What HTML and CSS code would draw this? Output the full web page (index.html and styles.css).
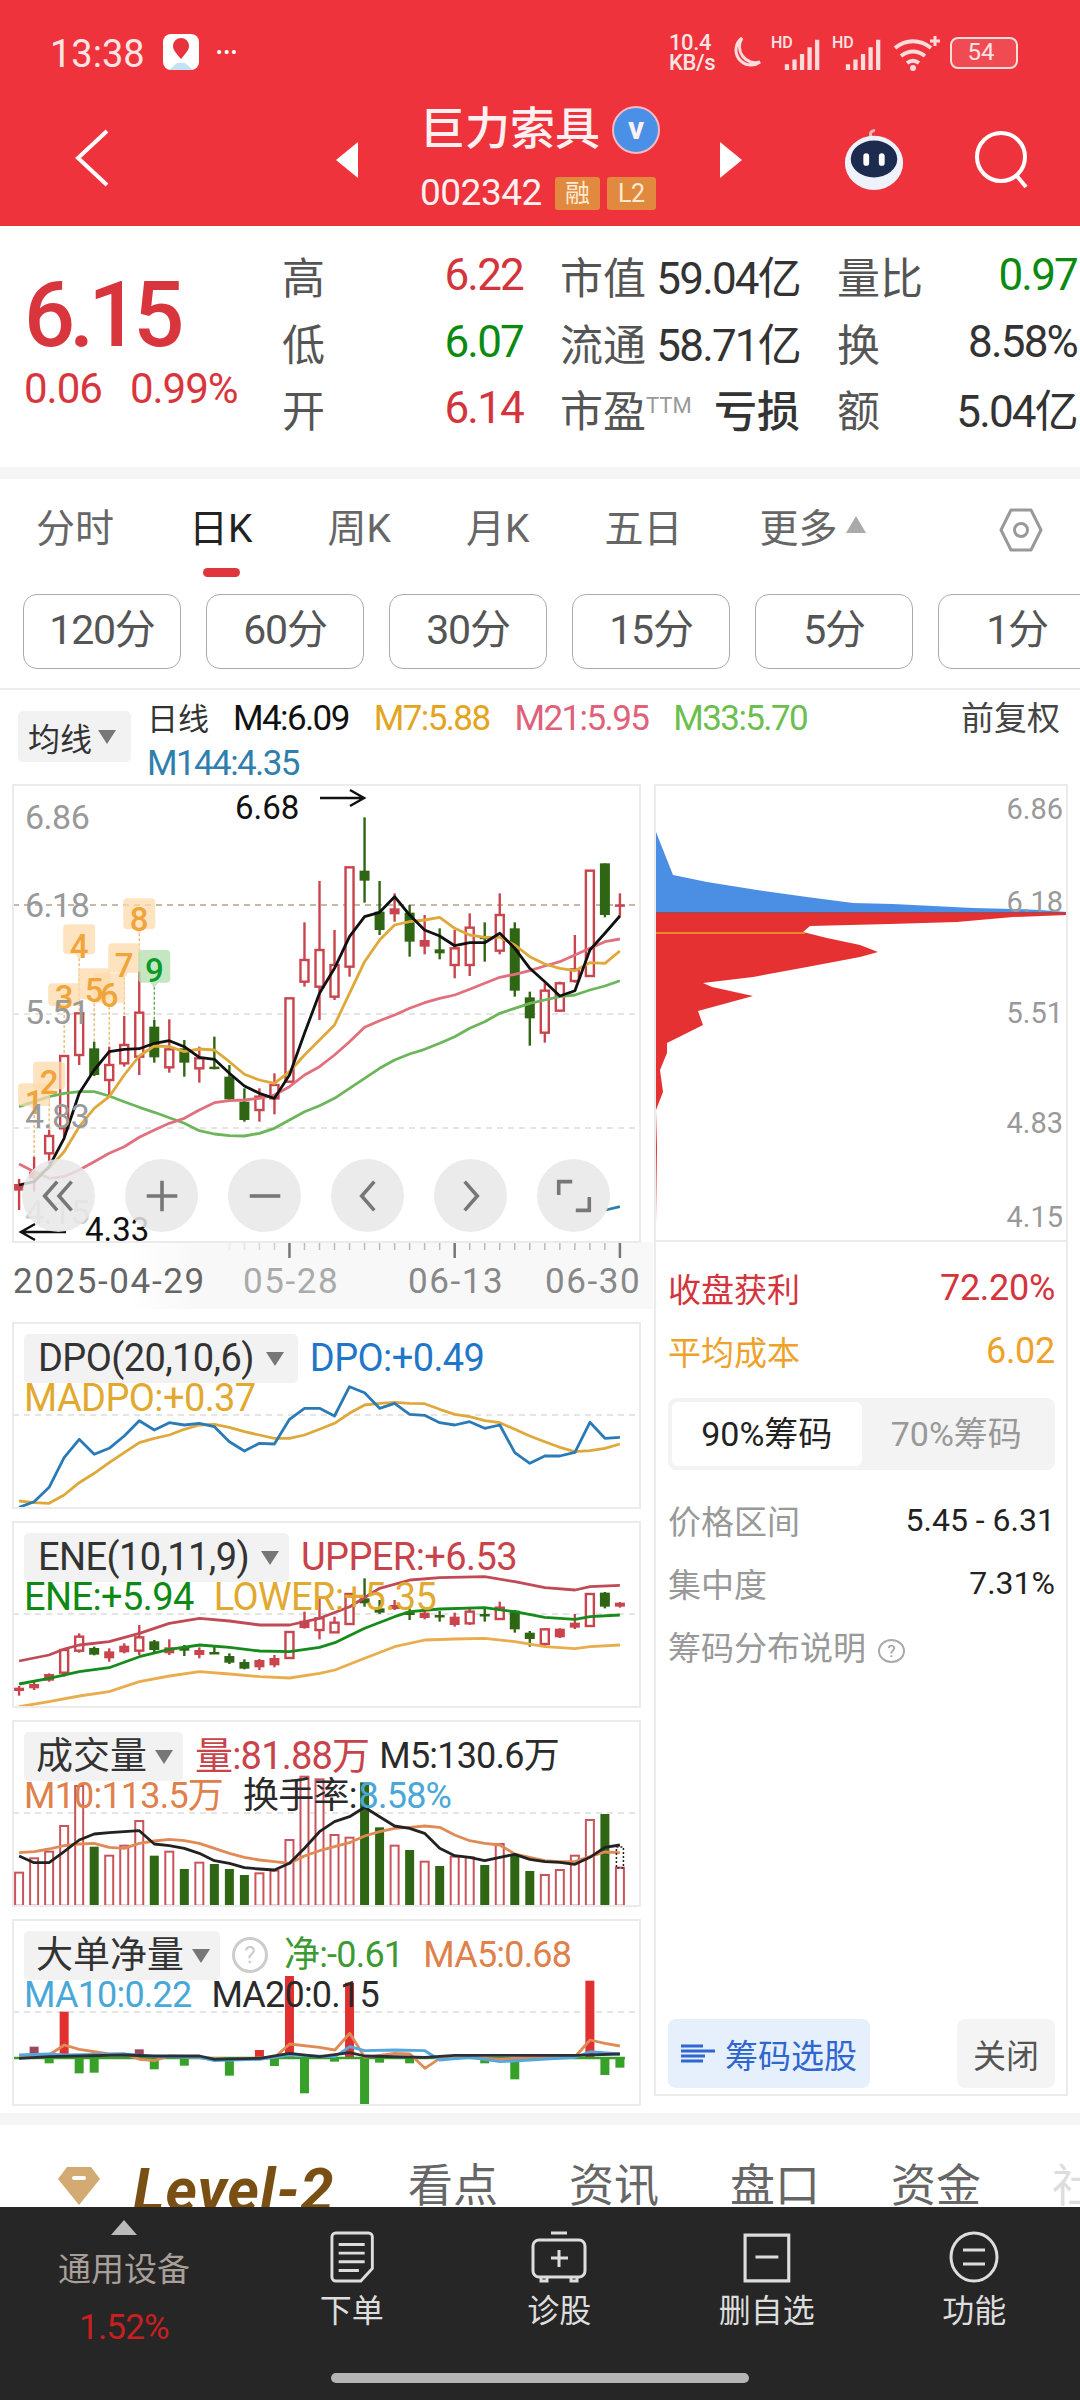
FILE: index.html
```html
<!DOCTYPE html>
<html lang="zh-CN">
<head>
    <meta charset="UTF-8">
    <meta name="viewport" content="width=device-width, initial-scale=1.0">
    <title>巨力索具</title>
    <link rel="stylesheet" href="styles.css">
</head>
<body>
    <header class="topbar">
        <div class="status">
            <span class="clock">13:38</span>
            <svg class="app-icon" viewBox="0 0 36 36">
                <rect width="36" height="36" rx="8" fill="#fff"/>
                <path d="M18 25c-5-6-8-9-8-13a8 8 0 0 1 16 0c0 4-3 7-8 13z" fill="#e8333c"/>
                <path d="M6 36l8-7h8l8 7z" fill="#bfe3f2"/>
            </svg>
            <span class="more-dots">•••</span>
            <span class="status-right">
                <span class="speed">10.4<br>KB/s</span>
                <svg class="moon" viewBox="0 0 34 36"><path d="M14 3a15 15 0 1 0 18 24A16 16 0 0 1 14 3z" fill="none" stroke="#fbdcdc" stroke-width="3"/></svg>
                <span class="signal"><i>HD</i><svg viewBox="0 0 40 36"><path d="M3 36v-6M11 36v-11M19 36v-17M27 36v-24M35 36V4" stroke="#fbdcdc" stroke-width="4.5"/></svg></span>
                <span class="signal"><i>HD</i><svg viewBox="0 0 40 36"><path d="M3 36v-6M11 36v-11M19 36v-17M27 36v-24M35 36V4" stroke="#fbdcdc" stroke-width="4.5"/></svg></span>
                <svg class="wifi" viewBox="0 0 48 36"><path d="M2 13c11-9 25-9 36 0M8 21c8-6 16-6 24 0M14 28c4-3 8-3 12 0" fill="none" stroke="#fbdcdc" stroke-width="4"/><circle cx="20" cy="33" r="3" fill="#fbdcdc"/><path d="M42 1v10M37 6h10" stroke="#fbdcdc" stroke-width="3"/></svg>
                <span class="battery"><span>54</span></span>
            </span>
        </div>
        <div class="navbar">
            <svg class="back" viewBox="0 0 36 58"><path d="M33 2L4 29l29 27" fill="none" stroke="#fff" stroke-width="4"/></svg>
            <span class="tri tri-left"></span>
            <div class="stock">
                <div class="stock-name">巨力索具<span class="vbadge">v</span></div>
                <div class="stock-code">002342<span class="tag-rong">融</span><span class="tag-l2">L2</span></div>
            </div>
            <span class="tri tri-right"></span>
            <svg class="robot" viewBox="0 0 66 66">
                <path d="M30 9c-2-4 1-7 4-6" fill="none" stroke="#f4b8b8" stroke-width="3"/>
                <ellipse cx="33" cy="36" rx="30" ry="28" fill="#eef3fb"/>
                <ellipse cx="33" cy="32" rx="24" ry="19" fill="#1d2b4f"/>
                <rect x="22" y="26" width="6" height="13" rx="3" fill="#fff"/>
                <rect x="38" y="26" width="6" height="13" rx="3" fill="#fff"/>
            </svg>
            <svg class="search" viewBox="0 0 58 58"><circle cx="27" cy="26" r="24" fill="none" stroke="#fff" stroke-width="4"/><path d="M42 44l10 12" stroke="#fff" stroke-width="4"/></svg>
        </div>
    </header>

    <section class="quote">
        <div class="last">
            <div class="last-price">6.15</div>
            <div class="last-change"><span>0.06</span><span>0.99%</span></div>
        </div>
        <div class="stats">
            <div class="cell"><span class="lbl">高</span><span class="up">6.22</span></div>
            <div class="cell"><span class="lbl">市值</span><span>59.04亿</span></div>
            <div class="cell"><span class="lbl">量比</span><span class="down">0.97</span></div>
            <div class="cell"><span class="lbl">低</span><span class="down">6.07</span></div>
            <div class="cell"><span class="lbl">流通</span><span>58.71亿</span></div>
            <div class="cell"><span class="lbl">换</span><span>8.58%</span></div>
            <div class="cell"><span class="lbl">开</span><span class="up">6.14</span></div>
            <div class="cell"><span class="lbl">市盈<sup>TTM</sup></span><span class="strong">亏损</span></div>
            <div class="cell"><span class="lbl">额</span><span>5.04亿</span></div>
        </div>
    </section>
    <div class="band"></div>

    <nav class="tabs">
        <span>分时</span>
        <span class="active">日K</span>
        <span>周K</span>
        <span>月K</span>
        <span class="five">五日</span>
        <span class="more">更多<b></b></span>
        <svg class="gear" viewBox="0 0 44 46"><path d="M12 3h20l10 20-10 20H12L2 23z" fill="none" stroke="#999" stroke-width="3" stroke-linejoin="round"/><circle cx="22" cy="23" r="6.5" fill="none" stroke="#999" stroke-width="3"/></svg>
    </nav>

    <div class="periods">
        <span>120分</span><span>60分</span><span>30分</span><span>15分</span><span>5分</span><span>1分</span>
    </div>

    <div class="ma-legend">
        <div class="picker ma-picker">均线<b></b></div>
        <div class="ma-values">
            <span class="ma-black"><em>日线</em>M4:6.09</span><span class="ma-yellow">M7:5.88</span><span class="ma-pink">M21:5.95</span><span class="ma-green">M33:5.70</span><br>
            <span class="ma-blue">M144:4.35</span>
        </div>
        <span class="adjust">前复权</span>
    </div>

    <main class="charts">
        <div class="left-col">
            <div class="panel main-chart">
                <svg viewBox="13 785 627 457">
                    <g id="main-plot"></g>
                    <text class="axis-label" x="25" y="829">6.86</text>
                    <text class="axis-label" x="25" y="917">6.18</text>
                    <text class="axis-label" x="25" y="1024">5.51</text>
                    <text class="axis-label" x="25" y="1128">4.83</text>
                    <text class="axis-label faint" x="25" y="1224">4.15</text>
                    <text class="extreme" x="235" y="819">6.68</text>
                    <path class="arrow" d="M320 798h44m-14-8l14 8-14 8"/>
                    <text class="extreme" x="85" y="1241">4.33</text>
                    <path class="arrow" d="M66 1232H21m14-8l-14 8 14 8"/>
                </svg>
                <div class="zoom-btns">
                    <span><svg viewBox="0 0 40 40"><path d="M18 4L4 20l14 16M34 4L20 20l14 16"/></svg></span>
                    <span><svg viewBox="0 0 40 40"><path d="M3 20h34M20 3v34"/></svg></span>
                    <span><svg viewBox="0 0 40 40"><path d="M3 20h34"/></svg></span>
                    <span><svg viewBox="0 0 40 40"><path d="M27 4L13 20l14 16"/></svg></span>
                    <span><svg viewBox="0 0 40 40"><path d="M13 4l14 16-14 16"/></svg></span>
                    <span><svg viewBox="0 0 40 40"><path d="M18 4H3v15M22 36h15V21"/></svg></span>
                </div>
            </div>
            <div class="axis">
                <svg viewBox="0 1242 640 18" id="axis-ticks"></svg>
                <div class="axis-dates">
                    <span>2025-04-29</span><span class="soft">05-28</span><span>06-13</span><span>06-30</span>
                </div>
            </div>

            <div class="panel sub-chart dpo-panel">
                <svg viewBox="13 1323 627 185" id="dpo-plot"></svg>
                <div class="sub-legend">
                    <div class="lg-top">
                        <div class="picker">DPO(20,10,6)<b></b></div>
                        <span class="c-blue">DPO:+0.49</span>
                    </div>
                    <div class="lg-next"><span class="c-gold">MADPO:+0.37</span></div>
                </div>
            </div>
            <div class="panel sub-chart">
                <svg viewBox="13 1522 627 185" id="ene-plot"></svg>
                <div class="sub-legend">
                    <div class="lg-top">
                        <div class="picker ene-picker">ENE(10,11,9)<b></b></div>
                        <span class="c-red">UPPER:+6.53</span>
                    </div>
                    <div class="lg-next"><span class="c-green">ENE:+5.94</span><span class="c-gold">LOWER:+5.35</span></div>
                </div>
            </div>
            <div class="panel sub-chart">
                <svg viewBox="13 1721 627 185" id="vol-plot"></svg>
                <div class="sub-legend compact">
                    <div class="lg-top">
                        <div class="picker">成交量<b></b></div>
                        <span class="c-red wide">量:81.88万</span><span class="c-dark">M5:130.6万</span>
                    </div>
                    <div class="lg-next"><span class="c-orange">M10:113.5万</span><span class="c-dark">换手率:</span><span class="c-sky tight">8.58%</span></div>
                </div>
            </div>
            <div class="panel sub-chart">
                <svg viewBox="13 1920 627 185" id="net-plot"></svg>
                <div class="sub-legend compact">
                    <div class="lg-top">
                        <div class="picker">大单净量<b></b></div>
                        <span class="help">?</span>
                        <span class="c-lime">净:-0.61</span><span class="c-orange">MA5:0.68</span>
                    </div>
                    <div class="lg-next"><span class="c-sky">MA10:0.22</span><span class="c-dark">MA20:0.15</span></div>
                </div>
            </div>
        </div>

        <aside class="chips">
            <div class="chip-chart">
                <svg viewBox="655 785 412 457">
                    <polygon fill="#4a8fe3" points="656,832 673,875 707,882 757,890 807,897 853,903 893,904 933,906 973,908 1013,909 1040,910 1067,912 656,912"/>
                    <polygon fill="#e53131" points="656,912 1067,912 1067,915 1013,917 957,922 890,924 810,926 803,932 827,938 860,945 878,952 860,957 807,967 753,977 703,983 712,987 753,996 698,1011 703,1025 667,1043 667,1053 660,1070 663,1092 656,1110 657,1147 656,1223"/>
                    <path d="M656 913h411" stroke="#b8404c" stroke-width="2"/>
                    <path d="M656 933h149" stroke="#f0a030" stroke-width="1.5"/>
                    <text class="chip-label" x="1063" y="819">6.86</text>
                    <text class="chip-label" x="1063" y="912">6.18</text>
                    <text class="chip-label" x="1063" y="1023">5.51</text>
                    <text class="chip-label" x="1063" y="1133">4.83</text>
                    <text class="chip-label" x="1063" y="1227">4.15</text>
                </svg>
            </div>
            <div class="chip-info">
                <div class="row up"><span>收盘获利</span><em>72.20%</em></div>
                <div class="row gold"><span>平均成本</span><em>6.02</em></div>
                <div class="segment"><span class="on">90%筹码</span><span>70%筹码</span></div>
                <div class="row muted"><span>价格区间</span><b>5.45 - 6.31</b></div>
                <div class="row muted"><span>集中度</span><b>7.31%</b></div>
                <div class="row muted"><span>筹码分布说明<i class="help-small">?</i></span></div>
                <div class="chip-actions">
                    <span class="pick">
                        <svg viewBox="0 0 34 20"><path d="M0 2h22M0 7h34M0 12h24M0 17h22" stroke="#2f66d0" stroke-width="3"/></svg>筹码选股
                    </span>
                    <span class="close">关闭</span>
                </div>
            </div>
        </aside>
    </main>

    <div class="band"></div>

    <div class="section-tabs">
        <svg class="gem" viewBox="0 0 42 38"><path d="M9 0h24l9 12-21 26L0 12z" fill="#d2aa72"/><rect x="14" y="9" width="14" height="4" rx="2" fill="#fff"/></svg>
        <span class="level2">Level-2</span>
        <span>看点</span><span>资讯</span><span>盘口</span><span>资金</span><span class="fade">社</span>
    </div>

    <footer class="dock">
        <div class="actions">
            <div class="index">
                <b></b>
                <span class="index-name">通用设备</span>
                <span class="index-pct">1.52%</span>
            </div>
            <div class="action">
                <svg viewBox="0 0 46 54"><path d="M6 2h34a4 4 0 0 1 4 4v33L32 52H6a4 4 0 0 1-4-4V6a4 4 0 0 1 4-4z"/><path d="M9 14h27M9 23h27M9 32h27M9 41h21"/></svg>
                下单
            </div>
            <div class="action">
                <svg viewBox="0 0 56 52"><path d="M20 2h16M8 9h40a6 6 0 0 1 6 6v25a6 6 0 0 1-6 6H8a6 6 0 0 1-6-6V15a6 6 0 0 1 6-6zM10 46v4h6v-4M40 46v4h6v-4M28 19v17M20 27h17"/></svg>
                诊股
            </div>
            <div class="action">
                <svg viewBox="0 0 46 50"><path d="M2 4h42v44H2zM12 25h22"/></svg>
                删自选
            </div>
            <div class="action">
                <svg viewBox="0 0 50 52"><ellipse cx="25" cy="26" rx="23" ry="24"/><path d="M14 19h22M14 33h22"/></svg>
                功能
            </div>
        </div>
        <div class="home-pill"></div>
    </footer>

    <script src="chart.js"></script>
</body>
</html>
```

FILE: styles.css
```css
* {
    box-sizing: border-box;
}
body {
    margin: 0;
    width: 1080px;
    height: 2400px;
    overflow: hidden;
    background: #fff;
    font-family: Roboto, "Noto Sans CJK SC", sans-serif;
    color: #333;
}
svg {
    display: block;
}

/* top red bar */
.topbar {
    height: 226px;
    background: #ee333c;
    color: #fff;
}
.status {
    height: 110px;
    padding: 34px 62px 0 50px;
    display: flex;
    align-items: flex-start;
}
.clock {
    font-size: 38px;
    line-height: 40px;
    color: #fbe4e4;
    width: 113px;
}
.app-icon {
    width: 36px;
    height: 36px;
}
.more-dots {
    font-size: 19px;
    line-height: 38px;
    margin-left: 17px;
    letter-spacing: 1px;
}
.status-right {
    margin-left: auto;
    display: flex;
    gap: 9px;
    align-items: center;
    height: 38px;
}
.speed {
    font-size: 22px;
    line-height: 20px;
    font-weight: 500;
    width: 50px;
    color: #fbe4e4;
    letter-spacing: -.4px;
}
.moon {
    width: 34px;
    height: 36px;
}
.signal {
    position: relative;
    width: 52px;
    display: block;
}
.signal svg {
    width: 40px;
    height: 34px;
    margin-left: 12px;
}
.signal i {
    position: absolute;
    left: 0;
    top: -3px;
    font-style: normal;
    font-size: 16px;
    font-weight: 500;
    color: #fbe4e4;
}
.wifi {
    width: 48px;
    height: 36px;
}
.battery {
    width: 68px;
    height: 32px;
    border: 2px solid #fbdcdc;
    border-radius: 8px;
    font-size: 24px;
    line-height: 27px;
    text-align: center;
    color: #fbe4e4;
    background: rgba(255, 255, 255, .12);
    padding-right: 6px;
}
.navbar {
    height: 116px;
    position: relative;
    display: flex;
    align-items: center;
}
.back {
    width: 36px;
    height: 58px;
    margin: 0 0 20px 74px;
}
.tri {
    width: 0;
    height: 0;
    border-top: 18px solid transparent;
    border-bottom: 18px solid transparent;
    margin-bottom: 16px;
}
.tri-left {
    border-right: 22px solid #fff;
    margin-left: 226px;
}
.tri-right {
    border-left: 22px solid #fff;
    margin-left: 0;
}
.stock {
    width: 362px;
    padding: 0 0 0 62px;
    margin-bottom: 20px;
}
.stock-name {
    font-size: 45px;
    line-height: 50px;
    font-weight: 500;
    display: flex;
    align-items: center;
    color: #fdf0f0;
}
.vbadge {
    width: 48px;
    height: 48px;
    border-radius: 50%;
    background: #4a90e6;
    border: 2px solid #f7b9c0;
    margin-left: 12px;
    text-align: center;
    font-size: 32px;
    line-height: 40px;
    font-weight: 700;
}
.stock-code {
    font-size: 37px;
    line-height: 36px;
    margin-top: 20px;
    display: flex;
    align-items: center;
    letter-spacing: -.5px;
    color: #fdf0f0;
}
.stock-code span {
    height: 33px;
    background: #e0893f;
    border-radius: 3px;
    font-size: 25px;
    line-height: 33px;
    text-align: center;
    color: #fde9d0;
}
.tag-rong {
    width: 45px;
    margin-left: 13px;
}
.tag-l2 {
    width: 49px;
    margin-left: 7px;
}
.robot {
    width: 72px;
    height: 64px;
    margin: 0 0 16px 96px;
}
.search {
    width: 58px;
    height: 58px;
    margin: 0 0 16px 64px;
}

/* quote block */
.quote {
    height: 241px;
    display: flex;
}
.last {
    width: 282px;
    padding: 40px 0 0 24px;
    color: #d8353d;
}
.last-price {
    font-size: 90px;
    line-height: 100px;
    font-weight: 500;
    letter-spacing: -6px;
}
.last-change {
    display: flex;
    gap: 28px;
    font-size: 42px;
    line-height: 44px;
    margin-top: 1px;
    letter-spacing: -1px;
}
.stats {
    flex: 1;
    padding-top: 16px;
    display: grid;
    grid-template-columns: 241px 240px 240px;
    grid-auto-rows: 66.5px;
    column-gap: 37px;
    font-size: 44px;
    letter-spacing: -1.8px;
}
.cell {
    display: flex;
    justify-content: space-between;
    align-items: center;
    white-space: nowrap;
}
.lbl {
    color: #555;
    font-size: 43px;
    letter-spacing: 0;
}
.lbl sup {
    font-size: 22px;
    color: #999;
    vertical-align: 14px;
    line-height: 0;
}
.up {
    color: #d4343c;
}
.down {
    color: #0b8a10;
}
.strong {
    font-weight: 500;
    font-size: 43px;
    letter-spacing: 0;
}
.band {
    height: 12px;
    background: #f5f5f5;
}

/* period tabs */
.tabs {
    height: 115px;
    position: relative;
    display: flex;
    align-items: center;
    padding: 0 0 24px 36px;
    font-size: 39px;
    color: #666;
}
.tabs span {
    margin-right: 75px;
    position: relative;
}
.tabs .five {
    margin-right: 77px;
}
.tabs .active {
    color: #222;
}
.tabs .active::after {
    content: "";
    position: absolute;
    left: 14px;
    top: 71px;
    width: 37px;
    height: 9px;
    border-radius: 5px;
    background: #e0353c;
}
.tabs .more {
    margin-right: 0;
    display: flex;
    align-items: center;
}
.tabs .more b {
    margin-left: 8px;
    border-left: 10px solid transparent;
    border-right: 10px solid transparent;
    border-bottom: 17px solid #aaa;
}
.gear {
    position: absolute;
    left: 999px;
    top: 28px;
    width: 44px;
    height: 46px;
}
.periods {
    height: 75px;
    margin-left: 23px;
    display: flex;
    gap: 25px;
    overflow: hidden;
}
.periods span {
    flex: 0 0 158px;
    border: 1px solid #aaa;
    border-radius: 14px;
    font-size: 41px;
    line-height: 70px;
    text-align: center;
    color: #555;
    letter-spacing: -1.2px;
}

/* MA legend */
.ma-legend {
    height: 97px;
    margin-top: 19px;
    border-top: 2px solid #ececec;
    position: relative;
    padding-left: 18px;
    display: flex;
    align-items: flex-start;
}
.picker {
    display: inline-flex;
    align-items: center;
    flex: none;
    height: 49px;
    padding: 0 14px;
    background: #f2f2f2;
    border-radius: 5px;
    color: #333;
}
.picker b {
    margin-left: 12px;
    border-left: 9px solid transparent;
    border-right: 9px solid transparent;
    border-top: 14px solid #777;
}
.ma-picker {
    margin-top: 21px;
    width: 113px;
    height: 51px;
    padding: 0 0 0 10px;
    font-size: 32px;
}
.ma-picker b {
    margin-left: 6px;
}
.ma-values {
    margin-left: 16px;
    font-size: 35px;
    line-height: 44px;
    letter-spacing: -1.6px;
    white-space: nowrap;
    padding-top: 7px;
}
.ma-values span {
    margin-right: 25px;
}
.ma-values em {
    font-style: normal;
    margin-right: 24px;
    color: #333;
    font-size: 31px;
    letter-spacing: 0;
}
.ma-black { color: #111; }
.ma-yellow { color: #e3a521; }
.ma-pink { color: #e0617a; }
.ma-green { color: #6cbf4e; }
.ma-blue { color: #2e7fad; }
.adjust {
    position: absolute;
    right: 20px;
    top: 7px;
    font-size: 33px;
    line-height: 44px;
    color: #444;
}

/* chart columns */
.charts {
    height: 1328px;
    display: flex;
    align-items: flex-start;
}
.left-col {
    width: 640px;
    margin-left: 13px;
    flex: none;
}
.panel {
    position: relative;
    width: 627px;
    outline: 2px solid #ebebeb;
    outline-offset: -1px;
}
.panel svg {
    width: 100%;
    height: 100%;
    overflow: hidden;
}
.main-chart {
    height: 457px;
}
.axis-label {
    font-size: 34px;
    fill: #999;
    letter-spacing: -.5px;
}
.axis-label.faint {
    fill: #ccc;
}
.extreme {
    font-size: 33px;
    fill: #111;
}
.arrow {
    fill: none;
    stroke: #111;
    stroke-width: 2.5;
}
.tag-num {
    font-size: 33px;
    font-weight: 500;
    text-anchor: middle;
}
.zoom-btns {
    position: absolute;
    left: 9px;
    top: 374px;
    display: flex;
    gap: 30px;
}
.zoom-btns span {
    width: 73px;
    height: 73px;
    border-radius: 50%;
    background: rgba(232, 232, 232, .85);
    display: flex;
    align-items: center;
    justify-content: center;
}
.zoom-btns svg {
    width: 36px;
    height: 36px;
    fill: none;
    stroke: #777;
    stroke-width: 4;
}
.axis {
    height: 67px;
    margin-bottom: 14px;
    margin-left: -13px;
    width: 653px;
    background: linear-gradient(90deg, #fff 20%, #f8f8f8 30%, #f8f8f8 100%);
}
.axis svg {
    width: 640px;
    height: 18px;
}
.axis-dates {
    display: grid;
    grid-template-columns: 230px 165px 137px auto;
    padding-left: 13px;
    font-size: 35px;
    line-height: 44px;
    letter-spacing: 1.6px;
    color: #888;
}
.axis-dates span:first-child {
    color: #666;
}
.axis-dates .soft {
    color: #aaa;
}
.sub-chart {
    height: 185px;
    margin-bottom: 14px;
}
.sub-legend {
    position: absolute;
    left: 11px;
    top: 11px;
    width: 600px;
    font-size: 38px;
    white-space: nowrap;
    letter-spacing: -.6px;
}
.lg-top {
    height: 44px;
    display: flex;
    align-items: flex-start;
    line-height: 49px;
}
.lg-next {
    line-height: 40px;
}
.sub-legend .picker {
    margin-right: 12px;
}
.sub-legend .ene-picker {
    padding-right: 10px;
}
.sub-legend span {
    margin-right: 20px;
}
.sub-legend .tight {
    margin-left: -18px;
}
.compact {
    font-size: 36px;
    letter-spacing: -.8px;
}
.compact .picker {
    font-size: 37px;
    letter-spacing: 0;
    padding: 0 10px 0 12px;
}
.compact .picker b {
    margin-left: 8px;
}
.sub-legend .wide {
    font-size: 38px;
    margin-right: 10px;
}
.sub-legend .help {
    display: block;
    flex: none;
    width: 36px;
    height: 36px;
    margin: 6px 16px 0 0;
    border: 3px solid #ccc;
    border-radius: 50%;
    font-size: 24px;
    line-height: 30px;
    text-align: center;
    color: #ccc;
    letter-spacing: 0;
}
.c-blue { color: #1f77c9; }
.c-gold { color: #e2a92f; }
.c-red { color: #c8434a; }
.c-green { color: #0e8a14; }
.c-dark { color: #2a2a2a; }
.c-orange { color: #e0804a; }
.c-sky { color: #4aa8d8; }
.c-lime { color: #3d9a33; }

/* chip distribution */
.chips {
    width: 412px;
    height: 1310px;
    margin-left: 2px;
    outline: 2px solid #ebebeb;
    outline-offset: -1px;
    flex: none;
}
.chip-chart {
    height: 457px;
    border-bottom: 2px solid #ebebeb;
}
.chip-chart svg {
    width: 412px;
    height: 457px;
}
.chip-label {
    font-size: 29px;
    fill: #999;
    text-anchor: end;
}
.chip-info {
    height: 853px;
    padding: 14px 12px 0 13px;
    font-size: 33px;
    display: flex;
    flex-direction: column;
}
.row {
    height: 63px;
    display: flex;
    justify-content: space-between;
    align-items: center;
    flex: none;
}
.row em {
    font-style: normal;
    font-size: 36px;
    letter-spacing: -.3px;
}
.row b {
    font-weight: 400;
    color: #222;
    font-size: 32px;
}
.gold {
    color: #eea22a;
}
.muted {
    color: #999;
}
.segment {
    height: 72px;
    background: #f3f3f3;
    border-radius: 8px;
    margin: 16px 0 18px;
    padding: 4px;
    display: flex;
    flex: none;
    font-size: 34px;
    color: #999;
}
.segment span {
    width: 190px;
    line-height: 64px;
    text-align: center;
}
.segment .on {
    background: #fff;
    border-radius: 6px;
    color: #222;
}
.help-small {
    display: inline-block;
    width: 27px;
    height: 24px;
    margin-left: 12px;
    border: 2px solid #aaa;
    border-radius: 50%;
    font-size: 17px;
    line-height: 20px;
    text-align: center;
    font-style: normal;
    vertical-align: 3px;
}
.chip-actions {
    margin-top: auto;
    margin-bottom: 7px;
    display: flex;
    justify-content: space-between;
}
.chip-actions span {
    height: 69px;
    border-radius: 8px;
    display: flex;
    align-items: center;
    justify-content: center;
}
.pick {
    width: 202px;
    background: #e6effc;
    color: #2f66d0;
}
.pick svg {
    width: 34px;
    height: 20px;
    margin-right: 10px;
}
.close {
    width: 98px;
    background: #f4f4f4;
    color: #555;
}

/* tabs cut by the dock */
.section-tabs {
    height: 82px;
    overflow: hidden;
    display: flex;
    align-items: flex-start;
    padding: 37px 0 0 58px;
    font-size: 45px;
    line-height: 50px;
    color: #666;
    white-space: nowrap;
}
.section-tabs span {
    flex: none;
    margin-right: 71px;
}
.gem {
    flex: none;
    width: 42px;
    height: 38px;
    margin: 5px 33px 0 0;
}
.section-tabs .level2 {
    font-size: 60px;
    line-height: 58px;
    font-weight: 700;
    font-style: italic;
    color: #7a4f14;
    margin-right: 75px;
    width: 200px;
    letter-spacing: 1px;
}
.section-tabs .fade {
    color: #ddd;
    margin-right: 0;
}

/* bottom dock */
.dock {
    height: 193px;
    background: #262626;
}
.actions {
    height: 166px;
    display: grid;
    grid-template-columns: 248px repeat(4, 207.5px);
}
.index {
    display: flex;
    flex-direction: column;
    align-items: center;
    padding-top: 13px;
}
.index b {
    border-left: 13px solid transparent;
    border-right: 13px solid transparent;
    border-bottom: 15px solid #bbb;
}
.index-name {
    font-size: 33px;
    line-height: 40px;
    margin-top: 15px;
    color: #a79f98;
}
.index-pct {
    font-size: 35px;
    line-height: 40px;
    margin-top: 18px;
    color: #c82020;
    letter-spacing: -.8px;
}
.action {
    display: flex;
    flex-direction: column;
    align-items: center;
    font-size: 32px;
    line-height: 40px;
    color: #ddd;
}
.action svg {
    height: 52px;
    margin: 24px 0 8px;
    fill: none;
    stroke: #ddd;
    stroke-width: 3;
}
.home-pill {
    width: 418px;
    height: 10px;
    margin: 0 auto;
    border-radius: 5px;
    background: #b5b5b5;
}
```

FILE: chart.js
```js
// chart data read off as [x, y] in plot units, one step per trading day
const NS = "http://www.w3.org/2000/svg";
const RED = "#c9444c";
const DARK_GREEN = "#2f6614";
const X = i => (46 + 36.2 * i) / 2.41;

function el(parent, tag, attrs, text) {
    const node = document.createElementNS(NS, tag);
    for (const k in attrs) node.setAttribute(k, attrs[k]);
    if (text) node.textContent = text;
    parent.appendChild(node);
    return node;
}

function line(parent, points, base, color, width) {
    const d = points.map(p => (p[0] / 2.41).toFixed(1) + "," + (base + p[1] / 3).toFixed(1)).join(" ");
    el(parent, "polyline", { points: d, fill: "none", stroke: color, "stroke-width": width || 2.8, "stroke-linejoin": "round" });
}

// a run of y values on the candle grid, first one at step `from`
function series(ys, from) {
    return ys.map((y, i) => [46 + 36.2 * (i + (from || 0)), y]);
}

function dash(parent, y, color) {
    el(parent, "path", { d: "M13 " + y + "H640", stroke: color || "#ddd", "stroke-width": 1.5, "stroke-dasharray": "6 5" });
}

function candles(parent, rows, base) {
    rows.forEach((c, i) => {
        const x = X(i);
        const top = base + c[0] / 3, t = base + c[1] / 3, b = base + c[2] / 3, low = base + c[3] / 3;
        const color = c[4] === "g" ? DARK_GREEN : RED;
        el(parent, "path", { d: "M" + x + " " + top + "V" + low, stroke: color, "stroke-width": 2.4 });
        const solid = c[4] === "g" || b - t < 9;
        if (solid) {
            el(parent, "rect", { x: x - 5, y: t, width: 10, height: Math.max(b - t, 2.5), fill: color });
        } else {
            el(parent, "rect", { x: x - 4, y: t, width: 8, height: b - t, fill: "#fff", stroke: color, "stroke-width": 2.4 });
        }
    });
}

// main K line
const mainCandles = [
    [1197,1212,1232,1290,"r"],[1130,1175,1195,1235,"r"],[1050,1068,1120,1150,"r"],[825,828,1045,1070,"r"],
    [700,700,825,855,"r"],[785,805,885,888,"g"],[800,855,900,945,"r"],[708,795,850,860,"r"],
    [575,698,830,885,"r"],[720,740,832,848,"g"],[718,808,862,878,"r"],[780,805,848,890,"g"],
    [800,835,865,908,"r"],[770,860,864,868,"g"],[855,890,958,960,"g"],[925,965,1020,1025,"g"],
    [925,950,990,1025,"r"],[880,915,955,1003,"r"],[655,655,905,905,"r"],[427,540,605,620,"r"],
    [303,510,620,720,"r"],[450,555,650,660,"r"],[262,262,560,590,"r"],[112,272,302,368,"g"],
    [303,395,450,465,"g"],[340,385,403,425,"r"],[375,398,485,530,"g"],[405,480,500,523,"r"],
    [445,508,520,538,"g"],[450,505,555,595,"r"],[400,443,555,588,"r"],[427,470,475,545,"g"],
    [340,405,512,523,"r"],[427,445,632,650,"g"],[635,652,715,797,"g"],[610,632,758,788,"r"],
    [605,610,692,695,"r"],[465,568,603,608,"r"],[270,272,588,590,"r"],[250,250,405,412,"g"],
    [340,373,379,410,"r"]
];
const m4 = [1215,1205,1160,1075,940,870,815,808,806,790,782,800,832,838,880,918,940,955,885,760,640,565,470,410,397,350,405,450,468,497,488,488,460,505,565,605,648,632,510,460,408];
const m7 = [1190,1165,1115,1040,985,950,885,828,798,800,815,807,810,845,883,900,910,875,825,780,735,640,545,480,435,425,420,412,445,465,472,472,495,530,552,565,572,548,550,513];
const m21 = [1152,1175,1195,1190,1170,1145,1120,1100,1072,1050,1030,1015,990,968,962,960,955,945,920,885,860,825,785,742,722,705,685,668,655,645,628,610,592,583,572,558,545,525,505,485,477];
const m33 = [980,965,950,940,935,935,948,965,982,997,1013,1030,1052,1062,1067,1068,1060,1045,1020,995,977,955,925,895,865,840,822,808,790,770,745,725,700,685,670,660,650,645,630,618,602];

const plot = document.getElementById("main-plot");
dash(plot, 905, "#b9a184");
dash(plot, 1014);
dash(plot, 1128);

// turn-count tags: number, step, number y, tag top, tag bottom, leader end
const tags = [
    ["1", 1, 965, 910, 990, 1130], ["2", 2, 905, 845, 940, 1050], ["3", 3, 650, 610, 690, 825],
    ["4", 4, 497, 433, 535, 700], ["5", 5, 630, 565, 670, 800], ["6", 6, 645, 580, 680, 800],
    ["7", 7, 555, 490, 590, 708], ["8", 8, 418, 355, 460, 575], ["9", 9, 570, 510, 620, 740]
];
tags.forEach(t => {
    const x = X(t[1]);
    el(plot, "path", { d: "M" + x + " " + (780 + t[4] / 3) + "V" + (780 + t[5] / 3), stroke: t[0] === "9" ? "#4f9a4f" : "#e8b060", "stroke-width": 1.2, "stroke-dasharray": "3 2" });
});

candles(plot, mainCandles, 780);
line(plot, series(m33), 780, "#6cb55a");
line(plot, series(m21), 780, "#e0707e");
line(plot, series(m7, 1), 780, "#dfa83a");
line(plot, series(m4), 780, "#111");
line(plot, [[1460,1290],[1494,1280]], 780, "#2e7fad");

tags.forEach(t => {
    const x = X(t[1]), top = 780 + t[3] / 3, bot = 780 + t[4] / 3;
    const green = t[0] === "9";
    el(plot, "path", {
        d: "M" + (x - 12) + " " + top + "h24a4 4 0 0 1 4 4v" + (bot - top - 12) + "a4 4 0 0 1 -4 4h-8l-4 5-4-5h-8a4 4 0 0 1 -4-4v-" + (bot - top - 12) + "a4 4 0 0 1 4-4z",
        fill: green ? "#b0dfae" : "#fcd9ab", opacity: .75
    });
});
tags.forEach(t => {
    el(plot, "text", { x: X(t[1]), y: 780 + t[2] / 3 + 12, class: "tag-num", fill: t[0] === "9" ? "#0a9a2a" : "#f0a43a" }, t[0]);
});

// date axis ticks
const ticks = document.getElementById("axis-ticks");
for (let i = 14; i <= 40; i++) {
    const major = i === 18 || i === 29 || i === 40;
    const fade = Math.min(1, (i - 13) / 6);
    el(ticks, "path", { d: "M" + X(i) + " 1243V" + (major ? 1258 : 1250), stroke: major ? "#777" : "#bbb", "stroke-width": major ? 2.5 : 1.5, opacity: major ? 1 : fade });
}

// DPO
const dpo = document.getElementById("dpo-plot");
dash(dpo, 1415);
line(dpo, series([573,578,580,555,518,490,458,428,398,385,375,358,345,343,352,365,375,385,385,375,358,340,310,285,280,277,280,281,298,313,320,332,338,358,378,395,412,425,422,415,402]), 1310, "#dfa83a");
line(dpo, series([592,575,532,443,388,433,415,378,332,360,338,345,340,350,395,423,400,402,328,295,295,318,230,248,295,280,313,316,338,345,335,355,345,428,460,438,438,427,337,385,382]), 1310, "#2a7ab8");

// ENE
const ene = document.getElementById("ene-plot");
dash(ene, 1614);
candles(ene, [
    [1128,1133,1143,1157,"r"],[1115,1122,1135,1140,"r"],[1090,1092,1112,1115,"r"],[1018,1020,1088,1100,"r"],
    [970,980,1022,1028,"r"],[1010,1014,1034,1036,"g"],[1015,1024,1045,1055,"r"],[1000,1007,1027,1030,"r"],
    [945,982,1022,1035,"r"],[990,994,1020,1026,"g"],[988,1012,1030,1035,"r"],[1005,1012,1022,1038,"g"],
    [1012,1020,1035,1045,"r"],[1010,1026,1028,1032,"g"],[1030,1038,1058,1062,"g"],[1048,1056,1076,1078,"g"],
    [1047,1050,1072,1080,"r"],[1035,1044,1066,1072,"r"],[965,966,1044,1046,"r"],[905,932,954,956,"r"],
    [865,925,960,988,"r"],[920,938,967,968,"r"],[850,852,942,945,"r"],[805,865,880,890,"g"],
    [870,895,908,912,"g"],[870,885,897,900,"r"],[895,905,915,930,"g"],[902,908,924,928,"r"],
    [903,915,918,935,"g"],[908,920,945,950,"r"],[895,905,940,945,"r"],[895,912,917,935,"g"],
    [875,893,927,930,"r"],[900,902,958,968,"g"],[963,968,987,1010,"g"],[955,958,1002,1008,"r"],
    [955,956,982,984,"r"],[912,938,953,957,"r"],[850,852,948,950,"r"],[846,848,890,895,"g"],
    [876,878,890,893,"r"]
], 1310);
line(ene, [[46,1053],[118,1035],[155,1017],[191,1005],[263,995],[336,970],[408,940],[481,925],[553,933],[626,945],[698,945],[770,925],[843,890],[915,835],[988,810],[1060,803],[1168,800],[1241,815],[1313,833],[1386,840],[1422,830],[1494,826]], 1310, "#c04a55");
line(ene, [[46,1122],[118,1105],[191,1085],[263,1073],[336,1040],[408,1018],[481,1005],[553,1012],[626,1023],[698,1025],[770,1012],[807,998],[879,955],[951,920],[988,905],[1060,897],[1168,893],[1241,905],[1313,922],[1386,928],[1422,920],[1494,915]], 1310, "#168a1a");
line(ene, [[46,1190],[118,1175],[191,1158],[263,1145],[336,1115],[408,1098],[481,1085],[553,1092],[626,1100],[698,1104],[770,1090],[807,1080],[879,1045],[951,1010],[1024,990],[1096,987],[1168,985],[1241,995],[1313,1010],[1386,1016],[1422,1010],[1494,1005]], 1310, "#e9ad4e");

// volume
const vol = document.getElementById("vol-plot");
dash(vol, 1813);
dash(vol, 1906);
const tops = [518,475,455,378,258,440,467,437,363,467,455,507,488,492,507,525,520,512,420,230,238,405,413,247,382,437,450,485,498,470,472,495,432,465,513,525,510,467,360,342,503];
const greens = [5,9,11,13,14,15,23,24,26,28,31,33,34,39];
tops.forEach((t, i) => {
    const y = 1700 + t / 3, h = 1700 + 620 / 3 - y;
    if (greens.includes(i)) {
        el(vol, "rect", { x: X(i) - 4.5, y: y, width: 9, height: h, fill: DARK_GREEN });
    } else {
        el(vol, "rect", { x: X(i) - 4, y: y, width: 8, height: h - 1, fill: "#fff", stroke: "#c9545c", "stroke-width": 2 });
    }
});
line(vol, series([458,455,447,437,432,430,442,445,430,423,418,422,430,445,460,472,480,485,490,468,452,440,428,408,395,385,382,378,382,405,422,430,435,462,472,482,485,485,470,456,458]), 1700, "#e08a55");
line(vol, series([468,488,488,455,420,402,398,395,392,432,437,445,460,482,490,503,507,510,490,445,395,365,350,322,350,378,385,400,445,467,472,482,472,463,478,485,487,493,472,442,435]), 1700, "#222");
el(vol, "rect", { x: X(40) - 3.5, y: 1847, width: 7, height: 21, fill: "none", stroke: "#222", "stroke-width": 1.5, "stroke-dasharray": "2 2" });

// net large orders
const net = document.getElementById("net-plot");
dash(net, 2012);
const base = 2058;
const bars = [[1,1040,"#a0465c"],[2,1090],[3,935],[4,1120],[5,1118],[8,1048,"#a0465c"],[9,1108],[11,1097],[14,1127],[16,1050],[17,1098],[18,828],[19,1180],[21,1085],[22,848],[23,1215],[24,1088],[26,1090],[31,1090],[33,1138],[38,842],[39,1125],[40,1103]];
bars.forEach(b => {
    const y = 1700 + b[1] / 3;
    const up = y < base;
    el(net, "rect", { x: X(b[0]) - 4.5, y: up ? y : base, width: 9, height: Math.abs(y - base), fill: b[2] || (up ? "#e03030" : "#36a028") });
});
el(net, "path", { d: "M13 2058H625", stroke: "#36a028", "stroke-width": 2.5 });
line(net, [[46,1070],[118,1065],[155,1035],[191,1048],[263,1062],[300,1062],[336,1078],[372,1082],[408,1068],[553,1078],[662,1072],[698,1032],[770,1042],[807,1050],[843,1000],[879,1072],[951,1060],[988,1062],[1024,1105],[1060,1075],[1132,1072],[1205,1078],[1277,1072],[1386,1070],[1422,1020],[1458,1030],[1494,1038]], 1700, "#e08a55");
line(net, [[46,1065],[118,1062],[155,1065],[300,1062],[372,1070],[481,1072],[517,1082],[626,1078],[698,1065],[807,1070],[843,1040],[879,1052],[951,1050],[1024,1052],[1060,1080],[1132,1072],[1205,1085],[1277,1080],[1386,1072],[1422,1055],[1494,1062]], 1700, "#55a8dc");
line(net, [[46,1075],[118,1070],[300,1065],[372,1068],[481,1068],[517,1078],[626,1075],[698,1060],[770,1070],[843,1058],[879,1068],[1024,1072],[1096,1066],[1241,1066],[1386,1066],[1494,1062]], 1700, "#2a2f38");
```
